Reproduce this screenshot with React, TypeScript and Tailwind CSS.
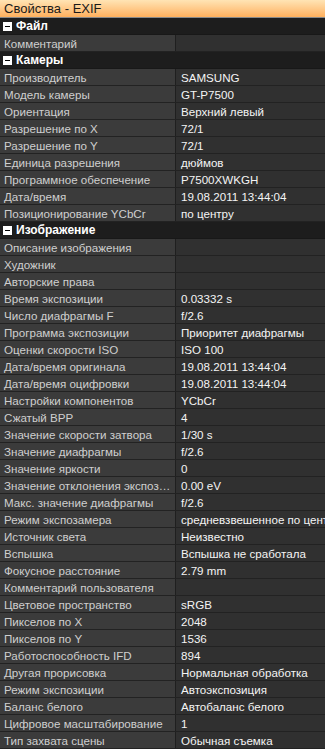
type Row = [string, string] | string

const rows: Row[] = [
    "Файл",
    ["Комментарий", ""],
    "Камеры",
    ["Производитель", "SAMSUNG"],
    ["Модель камеры", "GT-P7500"],
    ["Ориентация", "Верхний левый"],
    ["Разрешение по X", "72/1"],
    ["Разрешение по Y", "72/1"],
    ["Единица разрешения", "дюймов"],
    ["Программное обеспечение", "P7500XWKGH"],
    ["Дата/время", "19.08.2011 13:44:04"],
    ["Позиционирование YCbCr", "по центру"],
    "Изображение",
    ["Описание изображения", ""],
    ["Художник", ""],
    ["Авторские права", ""],
    ["Время экспозиции", "0.03332 s"],
    ["Число диафрагмы F", "f/2.6"],
    ["Программа экспозиции", "Приоритет диафрагмы"],
    ["Оценки скорости ISO", "ISO 100"],
    ["Дата/время оригинала", "19.08.2011 13:44:04"],
    ["Дата/время оцифровки", "19.08.2011 13:44:04"],
    ["Настройки компонентов", "YCbCr"],
    ["Сжатый BPP", "4"],
    ["Значение скорости затвора", "1/30 s"],
    ["Значение диафрагмы", "f/2.6"],
    ["Значение яркости", "0"],
    ["Значение отклонения экспозиции", "0.00 eV"],
    ["Макс. значение диафрагмы", "f/2.6"],
    ["Режим экспозамера", "средневзвешенное по центру"],
    ["Источник света", "Неизвестно"],
    ["Вспышка", "Вспышка не сработала"],
    ["Фокусное расстояние", "2.79 mm"],
    ["Комментарий пользователя", ""],
    ["Цветовое пространство", "sRGB"],
    ["Пикселов по X", "2048"],
    ["Пикселов по Y", "1536"],
    ["Работоспособность IFD", "894"],
    ["Другая прорисовка", "Нормальная обработка"],
    ["Режим экспозиции", "Автоэкспозиция"],
    ["Баланс белого", "Автобаланс белого"],
    ["Цифровое масштабирование", "1"],
    ["Тип захвата сцены", "Обычная съемка"],
]

function SectionHeader({ title }: { title: string }) {
    return (
        <div className="flex items-center h-[17px] bg-[#1d1d1d] border-b border-[#181818]">
            <span className="ml-[3px] w-[9px] h-[9px] bg-white flex items-center justify-center">
                <span className="w-[5px] h-[1px] bg-black" />
            </span>
            <span className="ml-[4px] text-[12px] font-bold text-white leading-none">{title}</span>
        </div>
    )
}

function PropRow({ label, value }: { label: string; value: string }) {
    return (
        <div className="flex h-[17px] border-b border-[#222222]">
            <div className="w-[176px] shrink-0 bg-[#3b3b3b] border-r border-[#1f1f1f] pl-[4px] pr-[2px] text-[11.6px] leading-[18px] text-[#cfcfcf] whitespace-nowrap overflow-hidden text-ellipsis">
                {label}
            </div>
            <div className="flex-1 bg-[#303030] pl-[5px] text-[11.6px] leading-[18px] text-[#f4f4f4] whitespace-nowrap overflow-hidden">
                {value}
            </div>
        </div>
    )
}

export default function App() {
    return (
        <div className="w-[325px] h-[749px] overflow-hidden bg-[#2a2a2a] font-['Liberation_Sans',Arial,sans-serif]">
            <div className="h-[18px] bg-gradient-to-b from-[#ffe4b4] to-[#ffb05c] border-b border-[#8a8a8a] flex items-center pl-[4px]">
                <span className="text-[13px] text-[#1a1a1a] leading-none">Свойства - EXIF</span>
            </div>
            {rows.map((r, i) =>
                typeof r === "string" ? (
                    <SectionHeader key={i} title={r} />
                ) : (
                    <PropRow key={i} label={r[0]} value={r[1]} />
                )
            )}
        </div>
    )
}
